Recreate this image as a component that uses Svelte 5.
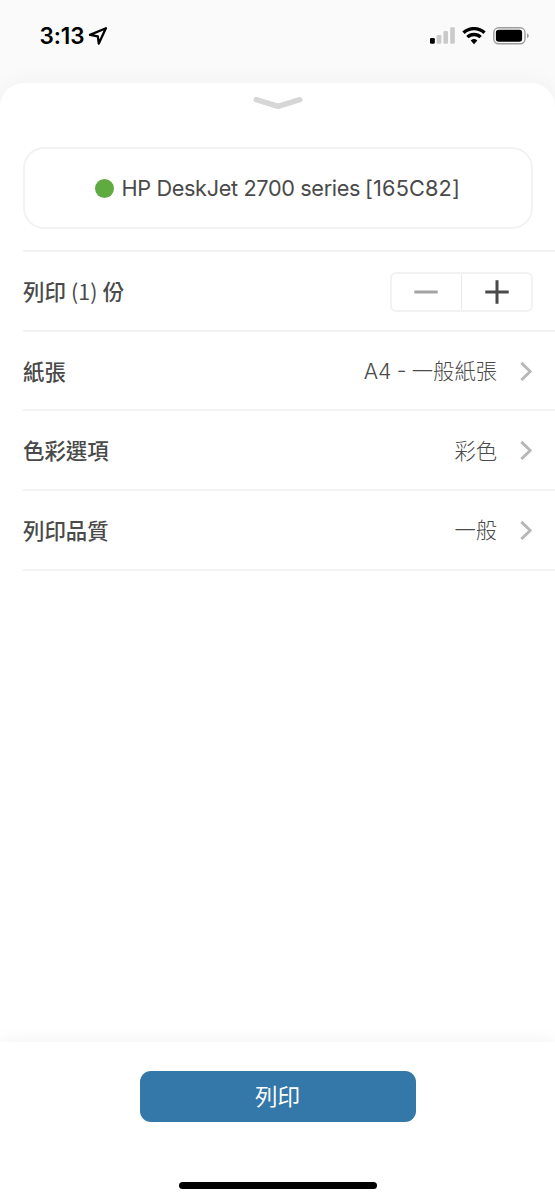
<script lang="ts">
    let copies: number = 1;

    const printer = "HP DeskJet 2700 series";
    const serial = "[165C82]";

    const options = [
        { label: "紙張", value: "A4 - 一般紙張" },
        { label: "色彩選項", value: "彩色" },
        { label: "列印品質", value: "一般" },
    ];
</script>

<div class="screen">
    <header>
        <div class="time">
            <span>3:13</span>
            <svg width="20" height="20" viewBox="0 0 20 20">
                <path d="M2 8.9 17.9 2.3 10.8 17.6 9.8 10.3Z" />
            </svg>
        </div>
        <div class="indicators">
            <svg class="signal" width="25" height="17" viewBox="0 0 25 17">
                <rect class="on" x="0" y="11" width="4.8" height="5.8" rx="1.2" />
                <rect x="6.7" y="8" width="4.6" height="8.8" rx="1.2" />
                <rect x="13.4" y="4" width="4.6" height="12.8" rx="1.2" />
                <rect x="20.2" y="0.2" width="4.6" height="16.6" rx="1.2" />
            </svg>
            <svg class="wifi" width="24" height="18" viewBox="0 0 24 18">
                <path class="arc" d="M1.5 5.8a15.3 15.3 0 0 1 21 0" />
                <path class="arc" d="M5.4 10.1a9.5 9.5 0 0 1 13.2 0" />
                <path d="M8.7 13.4a5.3 5.3 0 0 1 6.6 0L12 17.2Z" />
            </svg>
            <svg class="battery" width="37" height="18" viewBox="0 0 37 18">
                <rect class="shell" x="0.8" y="0.8" width="31.2" height="16" rx="4.8" />
                <rect x="2.9" y="2.8" width="26.2" height="12" rx="2.8" />
                <path class="tip" d="M34 6.3q1.8.6 1.8 2.5T34 11.3Z" />
            </svg>
        </div>
    </header>

    <main>
        <svg class="grabber" width="50" height="14" viewBox="0 0 50 14">
            <path d="M3.3 3.7 25 10.3 46.7 3.7" />
        </svg>

        <div class="printer">
            <i class="dot"></i>
            <span class="name">{printer}</span>
            <span class="serial">{serial}</span>
        </div>

        <div class="list">
            <div class="row">
                <div class="label">列印 <span class="count">({copies})</span> 份</div>
                <div class="stepper">
                    <button aria-label="減少" class:disabled={copies <= 1} on:click={() => copies = Math.max(1, copies - 1)}>
                        <svg width="24" height="24" viewBox="0 0 24 24"><path d="M0.3 12H23.7" /></svg>
                    </button>
                    <button aria-label="增加" on:click={() => copies += 1}>
                        <svg width="24" height="24" viewBox="0 0 24 24"><path d="M0.3 12H23.7M12 0.3V23.7" /></svg>
                    </button>
                </div>
            </div>
            {#each options as option}
            <div class="row">
                <div class="label">{option.label}</div>
                <div class="value">{option.value}</div>
                <svg class="chevron" width="12" height="20" viewBox="0 0 12 20">
                    <path d="M1.3 1.9 10.2 10.5 1.3 19.1" />
                </svg>
            </div>
            {/each}
        </div>
    </main>

    <footer>
        <button class="print">列印</button>
        <div class="home"></div>
    </footer>
</div>

<style>
    :global(body) {
        background: #fafafa;
    }

    .screen {
        display: flex;
        flex-direction: column;
        width: 555px;
        height: 1200px;
        overflow: hidden;
        background: #fafafa;
        color: #4a4a4a;
        font-family: Inter, "Noto Sans CJK TC", sans-serif;
    }

    svg {
        display: block;
        flex: none;
    }

    button {
        padding: 0;
        border: none;
        background: transparent;
        font-family: inherit;
        cursor: pointer;
    }

    header {
        display: flex;
        justify-content: space-between;
        height: 83px;
        padding: 0 25px 0 39.5px;
        box-sizing: border-box;
        color: #000;
    }

    .time {
        display: flex;
        align-items: center;
        gap: 4px;
        height: 71px;
        font-size: 22.5px;
        font-weight: 600;
        letter-spacing: -0.1px;
    }

    .time path {
        fill: none;
        stroke: #000;
        stroke-width: 2.3;
        stroke-linejoin: round;
    }

    .indicators {
        display: flex;
        align-items: center;
        height: 71px;
    }

    .signal rect {
        fill: #cacaca;
    }

    .signal rect.on {
        fill: #000;
    }

    .wifi {
        margin: 0 7px 0 7px;
    }

    .wifi .arc {
        fill: none;
        stroke: #000;
        stroke-width: 3.4;
    }

    .battery .shell {
        fill: none;
        stroke: #9c9c9c;
        stroke-width: 1.4;
    }

    .battery .tip {
        fill: #9c9c9c;
    }

    main {
        flex: 1;
        display: flex;
        flex-direction: column;
        padding-top: 13px;
        background: #fff;
        border-radius: 24px 24px 0 0;
        box-shadow: 0 0 24px rgba(0, 0, 0, 0.045);
    }

    .grabber {
        align-self: center;
    }

    .grabber path {
        fill: none;
        stroke: #d6d6d6;
        stroke-width: 5.5;
        stroke-linecap: round;
        stroke-linejoin: round;
    }

    .printer {
        display: flex;
        align-items: center;
        justify-content: center;
        height: 82px;
        margin: 37px 22.5px 0 23px;
        box-sizing: border-box;
        border: 2px solid #f2f2f2;
        border-radius: 21px;
        font-size: 21.7px;
    }

    .dot {
        width: 19px;
        height: 19px;
        margin-right: 7px;
        border-radius: 50%;
        background: #5faa41;
    }

    .name {
        letter-spacing: -0.36px;
    }

    .serial {
        margin-left: 5px;
        letter-spacing: 0.15px;
    }

    .list {
        margin: 21px 0 0 23px;
    }

    .list::before {
        content: "";
        display: block;
        height: 2px;
        background: #f2f2f2;
    }

    .row {
        display: flex;
        align-items: center;
        height: 79.7px;
        padding-right: 22px;
        box-sizing: border-box;
        border-bottom: 2px solid #f2f2f2;
    }

    .label {
        flex: 1;
        font-family: "Noto Sans CJK TC", sans-serif;
        font-size: 21.4px;
        font-weight: 500;
        line-height: 30px;
    }

    .count {
        margin: 0 0.5px;
        font-weight: 400;
    }

    .value {
        padding-top: 1px;
        font-size: 21.3px;
        font-weight: 300;
        line-height: 30px;
        word-spacing: -0.6px;
    }

    .chevron {
        margin: 0 1px 0 24px;
    }

    .value + .chevron {
        margin-left: 23px;
    }

    .chevron path {
        fill: none;
        stroke: #b8b8b8;
        stroke-width: 2.9;
    }

    .stepper {
        display: flex;
        width: 143px;
        height: 40px;
        margin-top: 2px;
        box-sizing: border-box;
        border: 2px solid #f2f2f2;
        border-radius: 6px;
    }

    .stepper button {
        flex: 1;
        display: flex;
        align-items: center;
        justify-content: center;
        padding-right: 1px;
    }

    .stepper button + button {
        padding: 0 0 0 1px;
        border-left: 1px solid #eaeaea;
    }

    .stepper path {
        fill: none;
        stroke: #4a4a4a;
        stroke-width: 3;
    }

    .stepper .disabled path {
        stroke: #a3a3a3;
    }

    footer {
        display: flex;
        flex-direction: column;
        align-items: center;
        justify-content: space-between;
        height: 158px;
        padding: 29px 0 11px;
        box-sizing: border-box;
        background: #fff;
        box-shadow: 0 0 18px rgba(0, 0, 0, 0.06);
    }

    .print {
        width: 276px;
        height: 51px;
        padding-bottom: 4px;
        border-radius: 11px;
        background: #3477a9;
        color: #fff;
        font-family: "Noto Sans CJK TC", sans-serif;
        font-size: 22.5px;
    }

    .home {
        width: 198px;
        height: 7px;
        border-radius: 4px;
        background: #000;
    }
</style>
